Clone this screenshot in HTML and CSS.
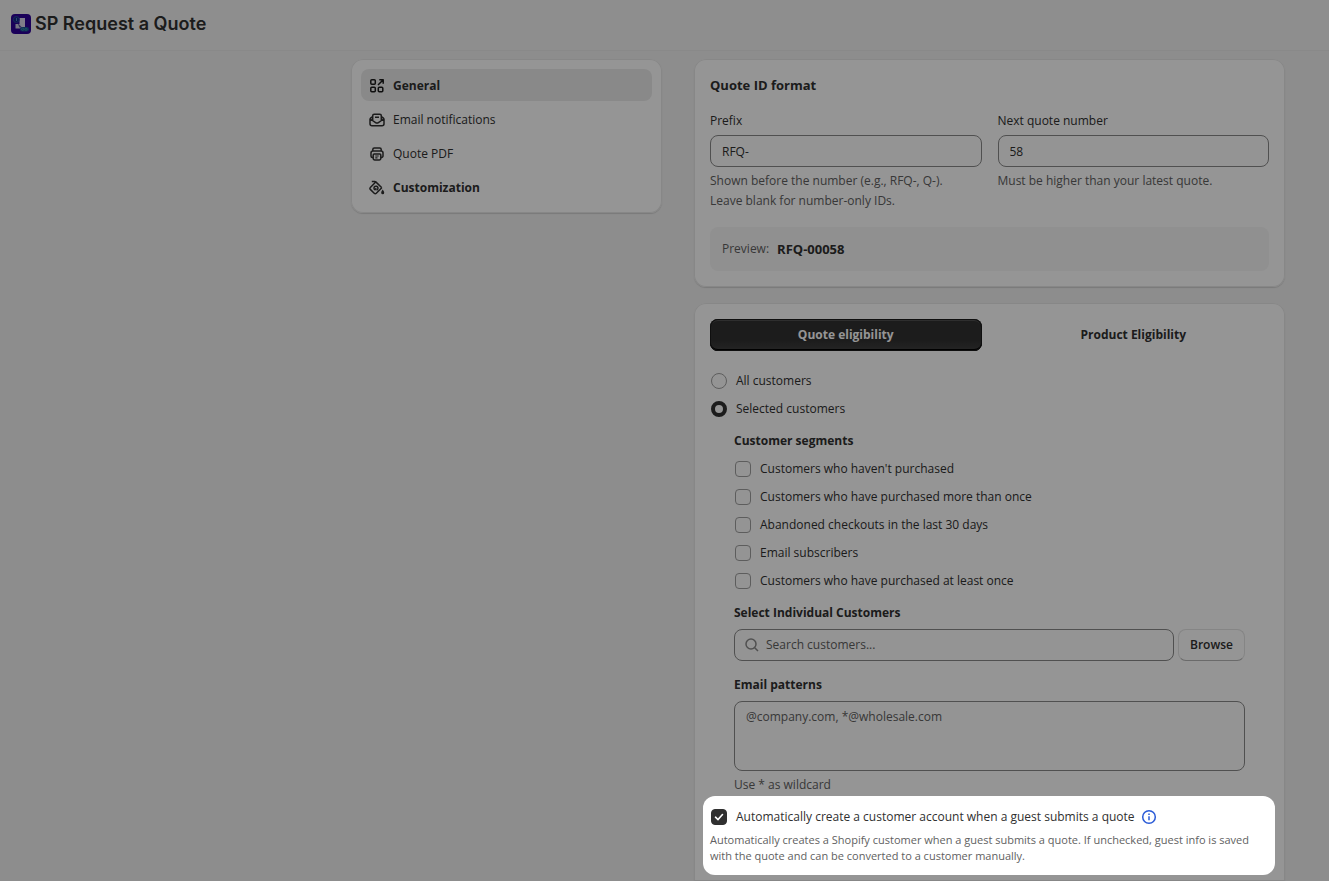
FILE: index.html
```html
<!DOCTYPE html>
<html lang="en">
<head>
<meta charset="utf-8">
<title>SP Request a Quote</title>
<link rel="stylesheet" href="styles.css">
</head>
<body>
<header class="topbar">
  <svg class="logo" viewBox="0 0 20 20" aria-hidden="true">
    <rect width="20" height="20" rx="4" fill="#2e0099"/>
    <path d="M8.500 4H14v9.500H8.500z" fill="#d9d7ea"/>
    <path d="M4.500 10h5v4.500h-5z" fill="#c9c6e0"/>
    <path d="M6.500 9l4 4-2 .5z" fill="#55489c"/>
    <circle cx="5.300" cy="5.500" r="3" fill="#1d1d8c" stroke="#24509e" stroke-width=".9"/>
    <path d="M5.500 4v3" stroke="#3f8fb8" stroke-width="1"/>
    <rect x="9" y="13" width="9" height="4.500" rx="2.200" fill="#1b4f98"/>
    <circle cx="11.700" cy="15.300" r="1.100" fill="none" stroke="#3aa0a8" stroke-width=".7"/>
    <circle cx="15" cy="15.300" r="1.100" fill="none" stroke="#3aa0a8" stroke-width=".7"/>
  </svg>
  <h1 class="app-title">SP Request a Quote</h1>
</header>
<main class="layout">
  <nav class="card side-nav" aria-label="Settings">
    <a class="nav-item nav-item--active" href="#general">
      <svg class="icon" viewBox="0 0 16 16"><rect x="1.800" y="1.800" width="4.500" height="4.500" rx="1"/><rect x="1.800" y="9.300" width="4.500" height="4.500" rx="1"/><rect x="9.300" y="9.300" width="4.500" height="4.500" rx="1"/><path d="M9 7L14 2M10.300 1.800H14.200V5.700"/></svg>
      General</a>
    <a class="nav-item" href="#email">
      <svg class="icon" viewBox="0 0 16 16"><path d="M3.200 5L1.800 5.800A2 2 0 0 0 1 7.300V11.800a2 2 0 0 0 2 2h10a2 2 0 0 0 2-2V7.300a2 2 0 0 0-.8-1.500L12.800 5M1.300 7l5.300 3.600a2.500 2.500 0 0 0 2.800 0L14.700 7M3.700 8V3.700a1.500 1.500 0 0 1 1.500-1.500h5.600a1.500 1.500 0 0 1 1.500 1.500V8M6 5.200h4"/></svg>
      Email notifications</a>
    <a class="nav-item" href="#pdf">
      <svg class="icon" viewBox="0 0 16 16"><path d="M3.800 4.800V3.500A1.500 1.500 0 0 1 5.300 2h5.400a1.500 1.500 0 0 1 1.500 1.500V4.800M4 11.500H3.500a1.500 1.500 0 0 1-1.500-1.500V7a2 2 0 0 1 2-2h8a2 2 0 0 1 2 2v3a1.500 1.500 0 0 1-1.500 1.500H12M5.200 8h5.600a1 1 0 0 1 1 1v3.500a1.500 1.500 0 0 1-1.500 1.500H5.700a1.500 1.500 0 0 1-1.500-1.500V9a1 1 0 0 1 1-1z"/><path stroke-width="1.100" d="M6.300 10h3.400M6.300 11.900h2.200"/></svg>
      Quote PDF</a>
    <a class="nav-item nav-item--strong" href="#customization">
      <svg class="icon" viewBox="0 0 16 16"><path d="M2.800 1.500h3a1.500 1.500 0 0 1 1 .4L12.800 7.800M6.500 2.300L1.300 7.500a1.300 1.300 0 0 0 0 1.900L5.200 13.300a1.500 1.500 0 0 0 2.100 0L12.800 7.800M5.500 9.500a2 2 0 1 1 2 .6M7.300 8.200L5.500 10.200"/><path class="icon-fill" d="M13.700 9.600c.9 1.400 1.500 2.200 1.500 3.100a1.500 1.500 0 0 1-3 0c0-.9.600-1.700 1.500-3.100z"/></svg>
      Customization</a>
  </nav>

  <div class="content">
    <section class="card">
      <h2 class="card-title">Quote ID format</h2>
      <div class="columns">
        <div class="field">
          <label for="prefix">Prefix</label>
          <input class="input" id="prefix" type="text" value="RFQ-">
          <p class="help">Shown before the number (e.g., RFQ-, Q-).<br>Leave blank for number-only IDs.</p>
        </div>
        <div class="field">
          <label for="next">Next quote number</label>
          <input class="input" id="next" type="text" value="58">
          <p class="help">Must be higher than your latest quote.</p>
        </div>
      </div>
      <p class="preview">Preview: <strong>RFQ-00058</strong></p>
    </section>

    <section class="card card--last">
      <div class="columns">
        <button class="tab tab--active" type="button">Quote eligibility</button>
        <button class="tab" type="button">Product Eligibility</button>
      </div>
      <div class="choices choices--top">
        <label class="choice"><input class="radio" type="radio" name="who">All customers</label>
        <label class="choice"><input class="radio" type="radio" name="who" checked>Selected customers</label>
      </div>
      <div class="nested">
        <h3 class="subhead">Customer segments</h3>
        <div class="choices">
          <label class="choice"><input class="check" type="checkbox">Customers who haven't purchased</label>
          <label class="choice"><input class="check" type="checkbox">Customers who have purchased more than once</label>
          <label class="choice"><input class="check" type="checkbox">Abandoned checkouts in the last 30 days</label>
          <label class="choice"><input class="check" type="checkbox">Email subscribers</label>
          <label class="choice"><input class="check" type="checkbox">Customers who have purchased at least once</label>
        </div>
        <label class="subhead subhead--field" for="search">Select Individual Customers</label>
        <div class="search-row">
          <div class="search">
            <svg class="icon search-icon" viewBox="0 0 16 16"><circle cx="7" cy="7" r="5"/><path d="M10.700 10.700L14 14"/></svg>
            <input class="search-input" id="search" type="text" placeholder="Search customers...">
          </div>
          <button class="browse" type="button">Browse</button>
        </div>
        <label class="subhead subhead--patterns" for="patterns">Email patterns</label>
        <textarea class="input patterns" id="patterns" placeholder="@company.com, *@wholesale.com"></textarea>
        <p class="help">Use * as wildcard</p>
      </div>
      <div class="spotlight">
        <div class="spot-row">
          <label class="choice"><input class="check" type="checkbox" checked>Automatically create a customer account when a guest submits a quote</label>
          <svg class="info" viewBox="0 0 16 16" aria-hidden="true"><circle cx="8" cy="8" r="6.300"/><path d="M8 7.300V11.200M8 4.500V5.900"/></svg>
        </div>
        <p class="note">Automatically creates a Shopify customer when a guest submits a quote. If unchecked, guest info is saved with the quote and can be converted to a customer manually.</p>
      </div>
    </section>
  </div>
</main>
</body>
</html>
```
FILE: styles.css
```css
* { box-sizing: border-box; }

body {
  margin: 0;
  min-height: 100vh;
  display: flex;
  flex-direction: column;
  overflow-x: hidden;
  background: #f1f1f1;
  color: #303030;
  font: 12px/20px "Open Sans", sans-serif;
}

h1, h2, h3, p { margin: 0; }
input, button, textarea { font: inherit; color: inherit; }

.topbar {
  display: flex;
  align-items: center;
  gap: 4px;
  height: 51px;
  padding: 0 11px 3px;
  background: #f3f3f3;
  border-bottom: 1px solid #ebebeb;
}
.logo { width: 20px; height: 20px; }
.app-title { font: 600 18px/24px Inter, sans-serif; }

.layout {
  flex: 1;
  display: grid;
  grid-template-columns: minmax(0, 311fr) minmax(0, 591fr);
  gap: 32px;
  padding: 8px 44px 0 351px;
}

.card {
  padding: 16px;
  background: #fff;
  border-radius: 12px;
  box-shadow: inset 0 0 0 1px #e8e8e8, 0 1px 1px #d0d0d0;
}

.side-nav {
  align-self: start;
  display: flex;
  flex-direction: column;
  gap: 2px;
  padding: 10px;
}
.nav-item {
  display: flex;
  align-items: center;
  gap: 8px;
  height: 32px;
  padding: 2px 8px 0;
  border-radius: 8px;
  color: inherit;
  text-decoration: none;
}
.nav-item--active { background: #ebebeb; font-weight: 700; }
.nav-item--active .icon { color: #1a1a1a; }
.nav-item--strong { font-weight: 700; }

.icon {
  flex: none;
  width: 16px;
  height: 16px;
  fill: none;
  stroke: currentColor;
  stroke-width: 1.5;
  stroke-linejoin: round;
}
.icon-fill { fill: currentColor; stroke: none; }

.content { display: flex; flex-direction: column; gap: 16px; }
.card-title { font-size: 13px; font-weight: 700; margin-bottom: 16px; }
.columns { display: grid; grid-template-columns: 1fr 1fr; gap: 16px; }
.field { display: flex; flex-direction: column; gap: 4px; }
.input {
  width: 100%;
  height: 32px;
  padding: 5px 11px;
  background: #fdfdfd;
  border: 1px solid #8a8a8a;
  border-radius: 8px;
}
.help { color: #616161; }
.preview {
  display: flex;
  gap: 8px;
  margin-top: 16px;
  padding: 12px;
  border-radius: 8px;
  background: #f7f7f7;
  color: #616161;
}
.preview strong { font-size: 13px; font-weight: 700; color: #303030; }

.card--last { flex: 1; padding-bottom: 6px; border-radius: 12px 12px 0 0; }
.tab {
  height: 32px;
  border: 0;
  border-radius: 8px;
  background: none;
  font-size: 12px;
  font-weight: 700;
}
.tab--active {
  background: linear-gradient(#303030 65%, #404040);
  color: #fff;
  box-shadow: inset 0 0 0 1px #1a1a1a, inset 0 -2px 0 #000, inset 0 2px 0 #505050;
}

.choices { display: flex; flex-direction: column; gap: 8px; }
.choices--top { margin-top: 20px; }
.choice { display: flex; align-items: center; gap: 8px; }
.radio, .check {
  appearance: none;
  flex: none;
  width: 16px;
  height: 16px;
  margin: 1px;
  border: 1px solid #a0a0a0;
  background: #fdfdfd;
}
.radio { border-radius: 50%; }
.radio:checked { border: 4px solid #303030; }
.check { border-radius: 4px; }
.check:checked {
  border-color: #303030;
  background: #303030 url("data:image/svg+xml,%3Csvg xmlns='http://www.w3.org/2000/svg' viewBox='0 0 14 14'%3E%3Cpath d='M3.500 7.200L6 9.600 10.500 4.500' fill='none' stroke='white' stroke-width='1.600' stroke-linecap='round'/%3E%3C/svg%3E") center / 14px;
}

.nested { padding: 12px 24px 0; }
.subhead { display: block; margin-bottom: 8px; font-size: 12px; font-weight: 700; }
.subhead--field { margin: 12px 0 6px; }
.subhead--patterns { margin: 14px 0 6px; }
.search-row { display: flex; gap: 4px; }
.search {
  flex: 1;
  display: flex;
  align-items: center;
  gap: 6px;
  height: 32px;
  padding: 0 9px;
  background: #fdfdfd;
  border: 1px solid #8a8a8a;
  border-radius: 8px;
}
.search-icon { color: #8a8a8a; }
.search-input { flex: 1; min-width: 0; padding: 0; border: 0; outline: 0; background: none; }
::placeholder { color: #616161; opacity: 1; }
.browse {
  height: 32px;
  padding: 0 11px;
  border: 1px solid #e3e3e3;
  border-bottom-color: #b5b5b5;
  border-radius: 8px;
  background: #fff;
  font-weight: 600;
}
.patterns { display: block; height: 70px; margin-bottom: 4px; resize: none; }

.spotlight {
  position: relative;
  margin: 1px -6px 0 -7px;
  padding: 11px 7px;
  border-radius: 12px;
  background: #fff;
  box-shadow: 0 0 0 3000px rgba(0, 0, 0, 0.415);
}
.spot-row { display: flex; align-items: center; gap: 6px; margin-bottom: 5px; }
.info { width: 16px; height: 16px; fill: none; stroke: #2a5bd7; stroke-width: 1.5; }
.note { color: #616161; font-size: 11px; line-height: 16px; }
```
